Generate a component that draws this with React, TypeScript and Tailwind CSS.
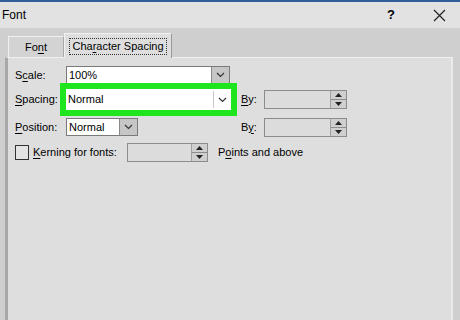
import type { ReactNode } from "react";

function U({ children }: { children: ReactNode }) {
  return <span className="underline underline-offset-[2px]">{children}</span>;
}

function Chevron() {
  return (
    <svg width="9" height="6" viewBox="0 0 9 6" fill="none">
      <path d="M1 1l3.5 3.5L8 1" stroke="#333" strokeWidth="1.2" />
    </svg>
  );
}

function Combo({ width, value }: { width: number; value: string }) {
  return (
    <div
      className="flex h-[18px] items-stretch border border-[#7a7a7a] bg-white"
      style={{ width }}
    >
      <div className="flex flex-1 items-center pl-[2px]">{value}</div>
      <div className="flex w-[18px] items-center justify-center border-l border-[#8a8a8a] bg-[#c6c6c6]">
        <Chevron />
      </div>
    </div>
  );
}

function Spin({ width }: { width: number }) {
  return (
    <div
      className="flex h-[19px] items-stretch border border-[#8c8c8c] bg-[#dcdcdc]"
      style={{ width }}
    >
      <div className="flex-1" />
      <div className="flex w-[16px] flex-col border-l border-[#a0a0a0] bg-[#cfcfcf]">
        <div className="flex flex-1 items-center justify-center border-b border-[#8c8c8c]">
          <svg width="7" height="4" viewBox="0 0 7 4">
            <path d="M0 4L3.5 0L7 4z" fill="#222" />
          </svg>
        </div>
        <div className="flex flex-1 items-center justify-center">
          <svg width="7" height="4" viewBox="0 0 7 4">
            <path d="M0 0L3.5 4L7 0z" fill="#222" />
          </svg>
        </div>
      </div>
    </div>
  );
}

export default function App() {
  return (
    <div
      className="flex h-[320px] w-[460px] flex-col overflow-hidden bg-[#cfcfcf] text-[11px] text-black"
      style={{ fontFamily: '"Liberation Sans", Arial, sans-serif' }}
    >
      <div className="flex h-[28px] shrink-0 items-center border-t-2 border-[#2f5f98] bg-[#e2e2e2] pl-[2px] pr-[14px]">
        <span className="flex-1 text-[12px]">Font</span>
        <span className="mr-[38px] text-[13px] font-bold">?</span>
        <svg width="13" height="13" viewBox="0 0 13 13">
          <path d="M1 1l11 11M12 1L1 12" stroke="#222" strokeWidth="1.2" />
        </svg>
      </div>

      <div className="flex h-[29px] shrink-0 items-end pl-[8px]">
        <div className="flex h-[21px] w-[56px] items-center justify-center border-t border-l border-[#f0f0f0] border-r border-r-[#a8a8a8] bg-[#d3d3d3]">
          Fo<U>n</U>t
        </div>
        <div className="relative z-10 -mb-px flex h-[25px] w-[108px] items-center justify-center border-t border-l border-[#f2f2f2] border-r border-r-[#9a9a9a] bg-[#dedede]">
          <span className="border border-dotted border-[#333] px-[2px] py-[1px] leading-[13px]">
            Cha<U>r</U>acter Spacing
          </span>
        </div>
      </div>

      <div className="ml-[5px] flex w-[448px] flex-1 flex-col border-t border-l-[3px] border-r-2 border-t-[#f0f0f0] border-l-[#a8a8a8] border-r-[#eaeaea] bg-[#dedede] pl-[7px] pt-[8px]">
        <div className="flex h-[18px] items-center">
          <div className="w-[51px]">
            S<U>c</U>ale:
          </div>
          <Combo width={164} value="100%" />
        </div>

        <div className="-mt-px flex items-center">
          <div className="w-[45px]">
            <U>S</U>pacing:
          </div>
          <div className="border-[6px] border-[#1fe51f]">
            <div className="flex h-[21px] w-[165px] items-stretch bg-white">
              <div className="flex flex-1 items-center pl-[2px]">Normal</div>
              <div className="my-[2px] flex w-[18px] items-center justify-center border-l border-[#c8c8c8]">
                <Chevron />
              </div>
            </div>
          </div>
          <div className="ml-[4px] w-[23px]">
            <U>B</U>y:
          </div>
          <Spin width={83} />
        </div>

        <div className="mt-px flex h-[20px] items-center">
          <div className="w-[51px]">
            <U>P</U>osition:
          </div>
          <div className="w-[175px]">
            <Combo width={72} value="Normal" />
          </div>
          <div className="w-[23px]">
            B<U>y</U>:
          </div>
          <Spin width={83} />
        </div>

        <div className="mt-[5px] flex h-[20px] items-center">
          <div className="h-[15px] w-[14px] border border-[#333] bg-[#e4e4e4]" />
          <div className="ml-[4px] w-[94px]">
            <U>K</U>erning for fonts:
          </div>
          <Spin width={81} />
          <div className="ml-[10px]">
            P<U>o</U>ints and above
          </div>
        </div>
      </div>
    </div>
  );
}
